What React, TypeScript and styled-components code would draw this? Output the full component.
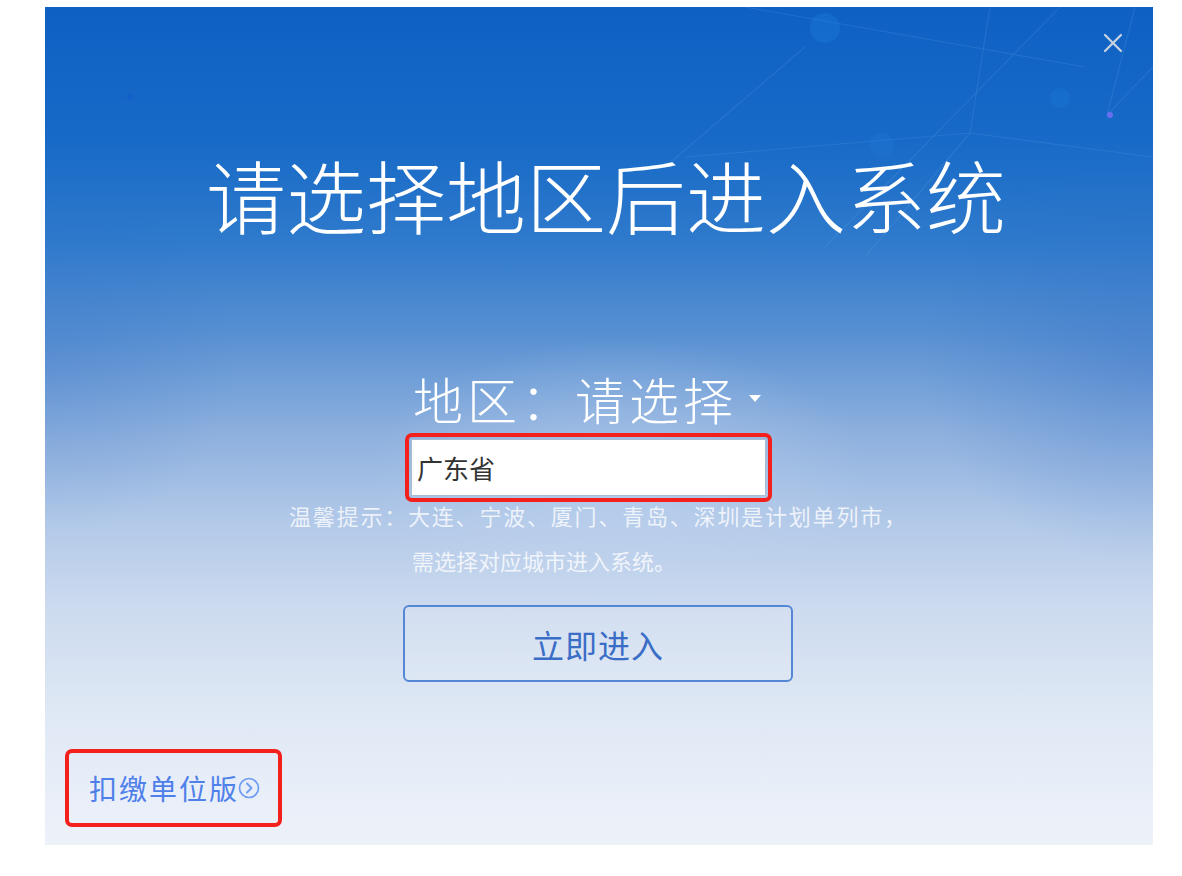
import styled, { createGlobalStyle } from "styled-components";

const GlobalStyle = createGlobalStyle`
  html, body {
    margin: 0;
    padding: 0;
    background: #ffffff;
  }
  body {
    font-family: "Noto Sans CJK SC", "Noto Sans", sans-serif;
  }
`;

export default function App() {
  return (
    <>
      <GlobalStyle />
      <Page>
        <Dialog>
          <NetworkLines viewBox="0 0 1108 838" preserveAspectRatio="none">
            <g stroke="rgba(110, 180, 245, 0.16)" strokeWidth="1.2" fill="none">
              <line x1="925" y1="126" x2="945" y2="0" />
              <line x1="925" y1="126" x2="1108" y2="150" />
              <line x1="925" y1="126" x2="640" y2="150" />
              <line x1="925" y1="126" x2="820" y2="250" />
              <line x1="1015" y1="0" x2="780" y2="240" />
              <line x1="1090" y1="0" x2="1062" y2="108" />
              <line x1="1062" y1="108" x2="1108" y2="60" />
              <line x1="700" y1="0" x2="1040" y2="60" />
              <line x1="620" y1="160" x2="760" y2="40" />
            </g>
            <circle cx="780" cy="21" r="15" fill="rgba(40, 140, 230, 0.22)" />
            <circle cx="1015" cy="91" r="10" fill="rgba(40, 140, 230, 0.18)" />
            <circle cx="837" cy="138" r="12" fill="rgba(40, 140, 230, 0.15)" />
            <circle cx="1065" cy="108" r="3" fill="rgba(140, 110, 255, 0.7)" />
            <circle cx="85" cy="90" r="3" fill="rgba(20, 90, 210, 0.5)" />
          </NetworkLines>

          <CloseButton aria-label="关闭">
            <svg width="20" height="20" viewBox="0 0 20 20">
              <path d="M2 2 L18 18 M18 2 L2 18" stroke="#c8d2e0" strokeWidth="2.2" strokeLinecap="round" />
            </svg>
          </CloseButton>

          <Title>请选择地区后进入系统</Title>

          <RegionLabel>
            地区：请选择
            <Caret />
          </RegionLabel>

          <Marked $left={360} $top={10} $width={367} $height={69} $pad={2}>
            <SelectBox>广东省</SelectBox>
          </Marked>

          <Hint $left={244} $top={2} $spacing={1.8}>
            温馨提示：大连、宁波、厦门、青岛、深圳是计划单列市，
          </Hint>
          <Hint $left={367} $top={23} $spacing={0}>
            需选择对应城市进入系统。
          </Hint>

          <EnterButton>立即进入</EnterButton>

          <Marked $left={20} $top={67} $width={217} $height={78} $pad={0}>
            <EditionLink>
              扣缴单位版
              <svg width="22" height="22" viewBox="0 0 22 22">
                <circle cx="11" cy="11" r="9.5" stroke="#6e9cf2" strokeWidth="1.7" fill="none" />
                <path d="M9 6.5 L13.5 11 L9 15.5" stroke="#6e9cf2" strokeWidth="1.9" fill="none" strokeLinecap="round" strokeLinejoin="round" />
              </svg>
            </EditionLink>
          </Marked>
        </Dialog>
      </Page>
    </>
  );
}

const Page = styled.div`
  padding: 7px 0 0 45px;
`;

const Dialog = styled.div`
  position: relative;
  width: 1108px;
  height: 838px;
  overflow: hidden;
  display: flex;
  flex-direction: column;
  align-items: flex-start;
  background:
    radial-gradient(ellipse 30% 22% at 52% 56%, rgba(195, 214, 240, 0.45), rgba(195, 214, 240, 0) 75%),
    radial-gradient(ellipse 30% 35% at 100% 42%, rgba(45, 105, 195, 0.3), rgba(45, 105, 195, 0) 70%),
    radial-gradient(ellipse 25% 30% at 0% 42%, rgba(45, 105, 195, 0.2), rgba(45, 105, 195, 0) 70%),
    linear-gradient(
      180deg,
      #0e61c3 0%,
      #176ac7 16%,
      #2f7acc 28%,
      #5890d2 39%,
      #8aaedd 50%,
      #b1c8e8 61%,
      #cddbef 72%,
      #dde7f4 83%,
      #e8eef8 93%,
      #edf2f9 100%
    );
`;

const NetworkLines = styled.svg`
  position: absolute;
  inset: 0;
  width: 100%;
  height: 100%;
  pointer-events: none;
`;

const CloseButton = styled.button`
  position: absolute;
  top: 26px;
  right: 30px;
  width: 20px;
  height: 20px;
  padding: 0;
  border: none;
  background: transparent;
  cursor: pointer;
  display: flex;

  svg {
    display: block;
  }
`;

const Title = styled.h1`
  position: relative;
  align-self: center;
  margin: 146px 0 0 14px;
  font-size: 80px;
  line-height: 80px;
  font-weight: 300;
  color: #ffffff;
  white-space: nowrap;
`;

const RegionLabel = styled.div`
  position: relative;
  display: flex;
  align-items: center;
  margin: 140px 0 0 368px;
  font-size: 50px;
  line-height: 50px;
  font-weight: 300;
  letter-spacing: 4px;
  color: #ffffff;
  white-space: nowrap;
`;

const Caret = styled.span`
  margin-left: 12px;
  width: 0;
  height: 0;
  border-left: 6.5px solid transparent;
  border-right: 6.5px solid transparent;
  border-top: 7px solid #ffffff;
`;

const Marked = styled.div<{ $left: number; $top: number; $width: number; $height: number; $pad: number }>`
  position: relative;
  box-sizing: border-box;
  margin: ${(p) => p.$top}px 0 0 ${(p) => p.$left}px;
  width: ${(p) => p.$width}px;
  height: ${(p) => p.$height}px;
  padding: ${(p) => p.$pad}px;
  border: 4px solid #f4201c;
  border-radius: 7px;
  display: flex;
  align-items: center;
`;

const SelectBox = styled.div`
  box-sizing: border-box;
  width: 100%;
  height: 100%;
  display: flex;
  align-items: center;
  padding-left: 5px;
  background: #ffffff;
  border: 1px solid #a9bcd6;
  font-size: 26px;
  color: #333333;
`;

const Hint = styled.div<{ $left: number; $top: number; $spacing: number }>`
  position: relative;
  margin: ${(p) => p.$top}px 0 0 ${(p) => p.$left}px;
  font-size: 22px;
  line-height: 22px;
  letter-spacing: ${(p) => p.$spacing}px;
  color: rgba(255, 255, 255, 0.78);
  white-space: nowrap;
`;

const EnterButton = styled.button`
  position: relative;
  box-sizing: border-box;
  margin: 34px 0 0 358px;
  width: 390px;
  height: 77px;
  border: 2px solid #5587d6;
  border-radius: 6px;
  background: rgba(255, 255, 255, 0.12);
  font-family: "Noto Sans CJK SC", "Noto Sans", sans-serif;
  font-size: 32px;
  letter-spacing: 1px;
  color: #3a6dc6;
  cursor: pointer;
`;

const EditionLink = styled.a`
  display: flex;
  align-items: center;
  padding-left: 20px;
  font-size: 28px;
  line-height: 28px;
  letter-spacing: 2px;
  color: #4f80ea;
  white-space: nowrap;
  cursor: pointer;

  svg {
    display: block;
    margin-left: -1px;
  }
`;
